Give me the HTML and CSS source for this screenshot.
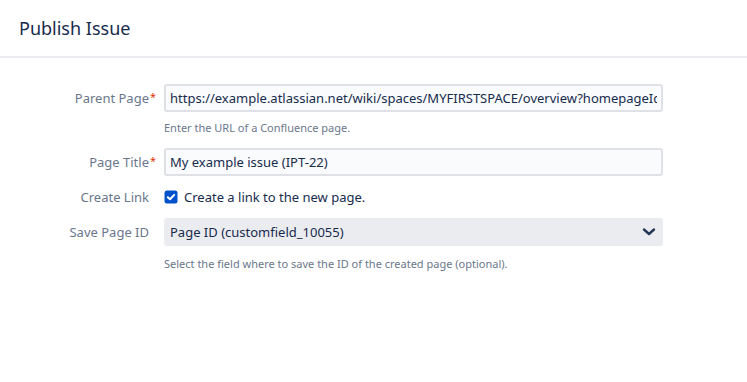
FILE: index.html
```html
<!DOCTYPE html>
<html>
<head>
    <title>Publish Issue</title>
    <link rel="stylesheet" href="styles.css">
</head>
<body>
    <div class="header">
        <h2>Publish Issue</h2>
    </div>

    <form class="form">
        <div class="field-row first-row">
            <label for="parentPage">Parent Page<span class="req">*</span></label>
            <div class="field">
                <input type="text" id="parentPage" class="text-input" value="https://example.atlassian.net/wiki/spaces/MYFIRSTSPACE/overview?homepageId=98305">
                <div class="help">Enter the URL of a Confluence page.</div>
            </div>
        </div>

        <div class="field-row">
            <label for="pageTitle">Page Title<span class="req">*</span></label>
            <div class="field">
                <input type="text" id="pageTitle" class="text-input" value="My example issue (IPT-22)">
            </div>
        </div>

        <div class="field-row">
            <label>Create Link</label>
            <div class="field checkbox-group">
                <span class="checkbox">
                    <svg viewBox="0 0 14 14" width="14" height="14">
                        <rect x="0.5" y="0.5" width="13" height="13" rx="2.5" fill="#0052cc"/>
                        <path d="M3.8 7.2 L6 9.3 L10.2 4.9" fill="none" stroke="#fff" stroke-width="2" stroke-linecap="round" stroke-linejoin="round"/>
                    </svg>
                </span>
                <span class="check-label">Create a link to the new page.</span>
            </div>
        </div>

        <div class="field-row">
            <label>Save Page ID</label>
            <div class="field">
                <div class="select">
                    <span>Page ID (customfield_10055)</span>
                    <svg class="chevron" viewBox="0 0 14 10" width="14" height="10">
                        <path d="M2 2.5 L7 7 L12 2.5" fill="none" stroke="#253858" stroke-width="2.4" stroke-linecap="round" stroke-linejoin="round"/>
                    </svg>
                </div>
                <div class="help help-select">Select the field where to save the ID of the created page (optional).</div>
            </div>
        </div>
    </form>
</body>
</html>
```

FILE: styles.css
```css
body {
    margin: 0;
    font-family: "Noto Sans", "Open Sans", sans-serif;
    color: #172b4d;
    background: #ffffff;
}

.header {
    height: 56px;
    padding: 0 19px;
    border-bottom: 2px solid #ebecf0;
    display: flex;
    align-items: center;
}

.header h2 {
    margin: 0;
    font-size: 18px;
    font-weight: 400;
    color: #172b4d;
}

.form {
    padding-top: 26px;
}

.field-row {
    display: grid;
    grid-template-columns: 156px 499px;
    column-gap: 8px;
    margin-top: 7px;
}

.field-row.first-row {
    margin-top: 0;
    margin-bottom: 13px;
}

.field-row label {
    position: relative;
    padding-right: 7px;
    font-size: 13px;
    color: #6b778c;
    text-align: right;
    line-height: 28px;
}

.req {
    position: absolute;
    right: 0;
    top: -1px;
    color: #de350b;
    font-size: 11px;
}

.text-input {
    display: block;
    box-sizing: border-box;
    width: 100%;
    height: 28px;
    margin: 0;
    padding: 0 4px;
    border: 2px solid #dfe1e6;
    border-radius: 3px;
    background: #fafbfc;
    font-family: inherit;
    font-size: 13px;
    color: #172b4d;
}

.help {
    font-size: 11px;
    color: #6b778c;
    margin-top: 9px;
    line-height: 14px;
}

.help-select {
    margin-top: 11px;
}

.checkbox-group {
    display: flex;
    align-items: center;
    gap: 6px;
    height: 28px;
}

.checkbox {
    display: flex;
    width: 14px;
    height: 14px;
}

.check-label {
    font-size: 13px;
    color: #172b4d;
}

.select {
    box-sizing: border-box;
    height: 28px;
    padding: 0 7px 0 6px;
    border-radius: 3px;
    background: #ebecf0;
    display: flex;
    align-items: center;
    justify-content: space-between;
    font-size: 13px;
    color: #172b4d;
}
```
